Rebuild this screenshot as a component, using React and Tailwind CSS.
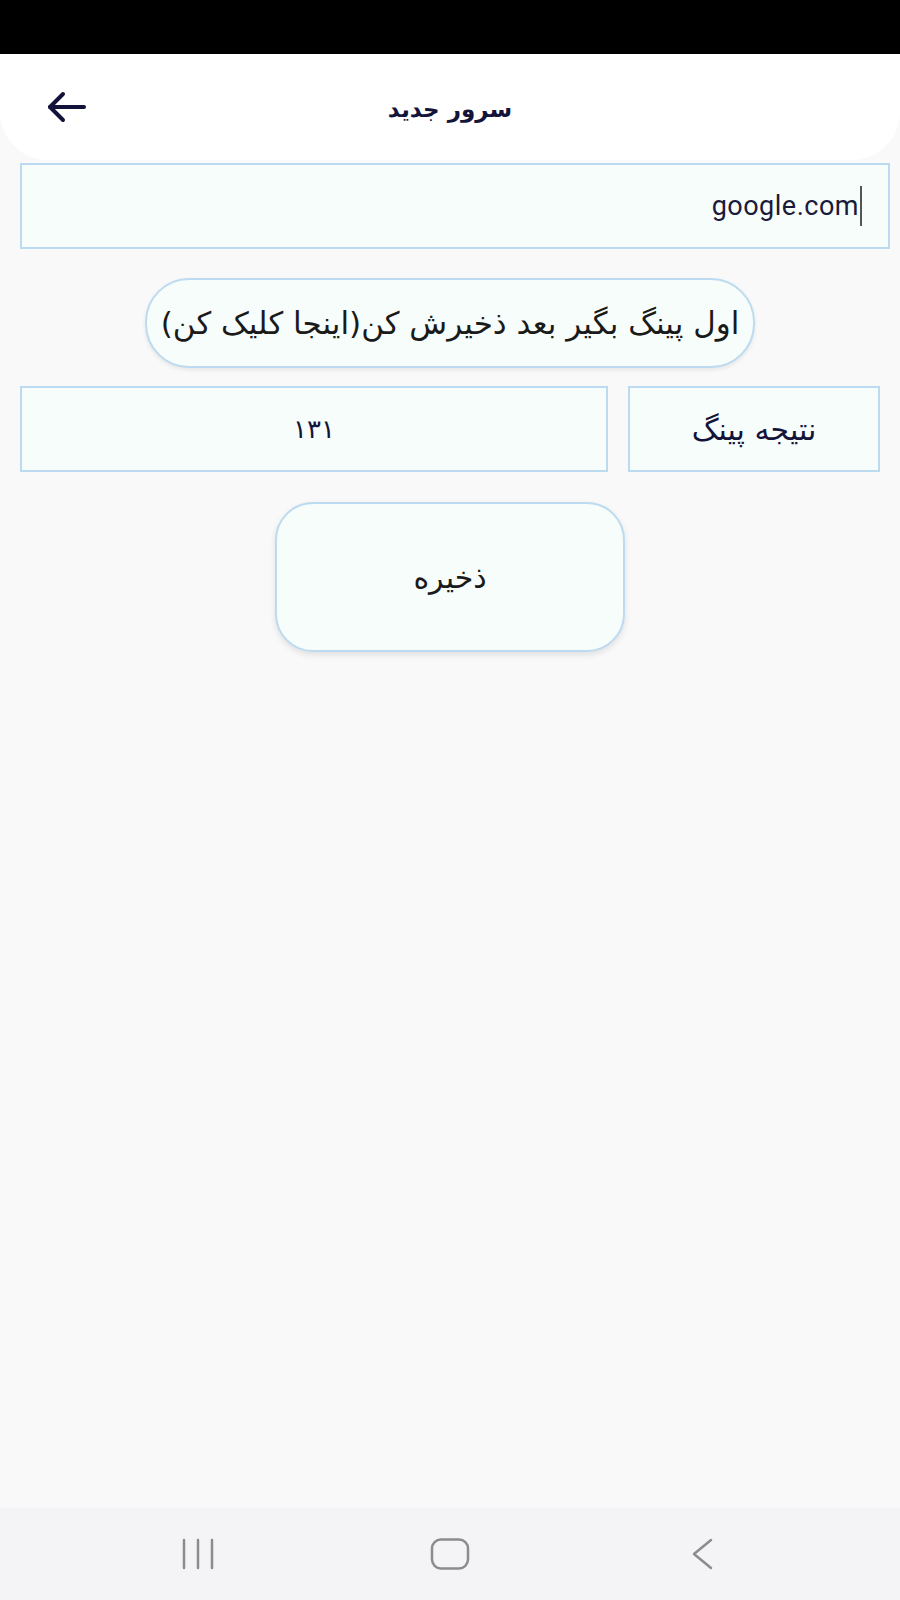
const FA = { fontFamily: '"DejaVu Sans", "Noto Sans", sans-serif' };

function BackArrow() {
  return (
    <svg width="40" height="32" viewBox="0 0 40 32" fill="none" stroke="#12123a" strokeWidth="4" strokeLinecap="round" strokeLinejoin="round">
      <path d="M38 16H4" />
      <path d="M17 3L4 16l13 13" />
    </svg>
  );
}

function NavBar() {
  return (
    <div className="h-[92px] bg-[#f4f4f6] flex items-center justify-center">
      <div className="w-[252px] flex justify-center">
        <svg width="34" height="32" viewBox="0 0 34 32" fill="none" stroke="#8c8c8c" strokeWidth="2.5" strokeLinecap="round">
          <path d="M3 2v28M17 2v28M31 2v28" />
        </svg>
      </div>
      <div className="w-[252px] flex justify-center">
        <svg width="40" height="32" viewBox="0 0 40 32" fill="none" stroke="#8c8c8c" strokeWidth="2.5">
          <rect x="2" y="1.5" width="36" height="29" rx="9" />
        </svg>
      </div>
      <div className="w-[252px] flex justify-center">
        <svg width="24" height="32" viewBox="0 0 24 32" fill="none" stroke="#8c8c8c" strokeWidth="2.5" strokeLinecap="round" strokeLinejoin="round">
          <path d="M21 2L4 16l17 14" />
        </svg>
      </div>
    </div>
  );
}

export default function App() {
  return (
    <div className="min-h-[1600px] flex flex-col bg-[#f9f9fa]" style={FA}>
      <div className="h-[54px] bg-black" />

      {/* header */}
      <div className="h-[106px] bg-white rounded-b-[48px] grid grid-cols-[1fr_auto_1fr] items-center px-[46px]">
        <div className="flex items-center">
          <BackArrow />
        </div>
        <h1 dir="rtl" className="text-[23px] font-bold text-[#14143a] pt-[5px]">سرور جدید</h1>
        <div />
      </div>

      <div className="flex flex-col pt-[3px]">
        {/* url field */}
        <div className="ml-[20px] mr-[10px] h-[86px] border-2 border-[#bddbf0] bg-[#f7fdfa] flex items-center justify-end pr-[26px]">
          <span dir="ltr" className="text-[27px] text-[#1a1a3a] tracking-[0.5px]" style={{ fontFamily: 'Roboto, "Liberation Sans", sans-serif' }}>
            google.com
          </span>
          <span className="w-[2px] h-[40px] bg-[#555] ml-[1px]" />
        </div>

        {/* ping button */}
        <button
          dir="rtl"
          className="mx-auto mt-[29px] w-[610px] h-[90px] rounded-[44px] border-2 border-[#bddbf0] bg-[#f7fdfa] shadow-[0_2px_4px_rgba(0,0,0,0.08)] text-[31px] text-[#1a1a1a] flex items-center justify-center"
        >
          اول پینگ بگیر بعد ذخیرش کن(اینجا کلیک کن)
        </button>

        {/* result row */}
        <div className="mt-[18px] px-[20px] flex gap-[20px] h-[86px]">
          <div className="flex-1 border-2 border-[#bddbf0] bg-[#f7fdfa] flex items-center justify-center text-[26px] text-[#14143a]">
            ۱۳۱
          </div>
          <div dir="rtl" className="w-[252px] border-2 border-[#bddbf0] bg-[#f7fdfa] flex items-center justify-center text-[30px] text-[#14143a]">
            نتیجه پینگ
          </div>
        </div>

        {/* save */}
        <button
          dir="rtl"
          className="mx-auto mt-[30px] w-[350px] h-[150px] rounded-[38px] border-2 border-[#bddbf0] bg-[#f7fdfa] shadow-[0_3px_6px_rgba(0,0,0,0.1)] text-[30px] text-[#1a1a1a] flex items-center justify-center"
        >
          ذخیره
        </button>
      </div>

      <div className="flex-1" />
      <NavBar />
    </div>
  );
}
